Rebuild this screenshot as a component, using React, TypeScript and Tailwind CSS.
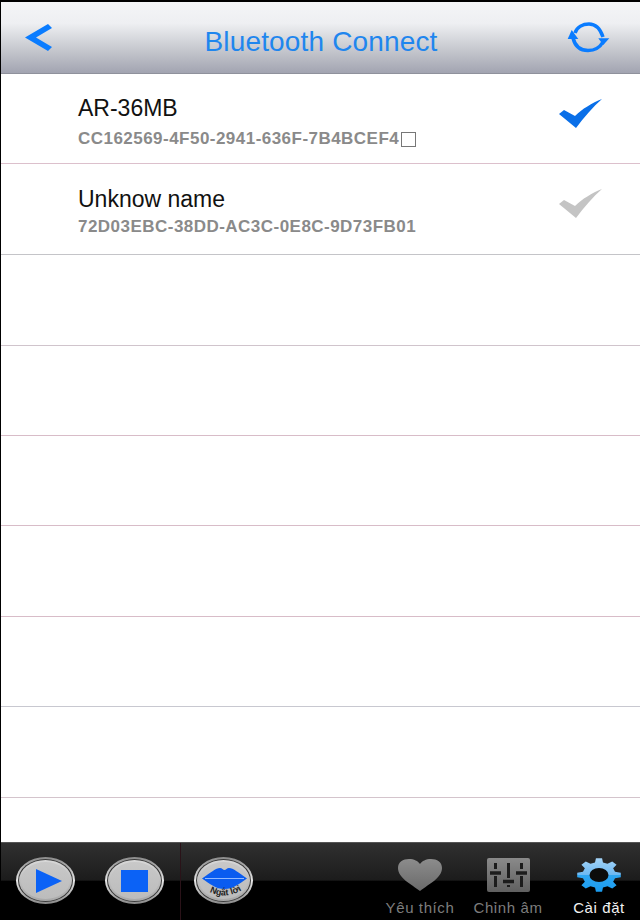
const rows: { name?: string; id?: string; check?: string; line: string; h: string; top?: string; gap?: string }[] = [
  { name: "AR-36MB", id: "CC162569-4F50-2941-636F-7B4BCEF4", check: "#0a6fe8", line: "border-[#dcc0cc]", h: "h-[90px]", top: "pt-[8px]", gap: "mt-[9px]" },
  { name: "Unknow name", id: "72D03EBC-38DD-AC3C-0E8C-9D73FB01", check: "#c4c4c4", line: "border-[#c4c4c8]", h: "h-[91px]", top: "pt-[5px]", gap: "mt-[6px]" },
  { line: "border-[#d0c4cc]", h: "h-[91px]" },
  { line: "border-[#d8bcc8]", h: "h-[90px]" },
  { line: "border-[#d8bcc8]", h: "h-[90px]" },
  { line: "border-[#d8bcc8]", h: "h-[91px]" },
  { line: "border-[#c8c8d0]", h: "h-[90px]" },
  { line: "border-[#d4c4cc]", h: "h-[91px]" },
];

function gearPath() {
  const cx = 22;
  const cy = 17;
  const pts: string[] = [];
  const at = (deg: number, rx: number, ry: number) => {
    const a = (deg * Math.PI) / 180;
    return `${(cx + Math.cos(a) * rx).toFixed(2)} ${(cy + Math.sin(a) * ry).toFixed(2)}`;
  };
  for (let i = 0; i < 8; i++) {
    const c = i * 45;
    pts.push(at(c - 14, 16.5, 13), at(c - 8, 22, 17), at(c + 8, 22, 17), at(c + 14, 16.5, 13));
  }
  return `M${pts.join(" L")} Z`;
}

function Check({ color }: { color: string }) {
  return (
    <svg width="46" height="32" viewBox="0 0 46 32" className="-mt-[10px] -mr-[2px]">
      <path d="M1 16 L6 12 L17 18 C24 11 34 5 44 1 C35 9 26 19 18 30 Z" fill={color} />
    </svg>
  );
}

function Disc({ children }: { children: React.ReactNode }) {
  return (
    <div className="w-[59px] h-[47px] rounded-[50%] bg-gradient-to-b from-[#8a8a8a] via-[#e8e8e8] to-[#8a8a8a] p-[2px] shrink-0">
      <div className="w-full h-full rounded-[50%] bg-[#3a3a3a] p-[1px]">
        <div className="w-full h-full rounded-[50%] bg-gradient-to-b from-[#d8d8d8] to-[#a8a8a8] p-[2px]">
          <div className="relative w-full h-full rounded-[50%] bg-gradient-to-b from-[#c8c8c8] to-[#bcbcbc] flex items-center justify-center overflow-hidden">
            {children}
          </div>
        </div>
      </div>
    </div>
  );
}

export default function App() {
  return (
    <div className="w-[640px] h-[920px] bg-white flex flex-col overflow-hidden border-l border-l-black font-['Liberation_Sans',Arial,sans-serif]">
      <div className="h-[2px] bg-black -ml-px shrink-0" />
      <header className="h-[72px] shrink-0 flex items-center justify-between border-b border-b-[#8f919c] bg-[linear-gradient(to_bottom,#f4f5f7_0%,#eeeff2_30%,#c8cad0_65%,#a2a4b1_100%)] pl-[24px] pr-[30px]">
        <svg width="28" height="28" viewBox="0 0 28 28" className="mt-[1px]">
          <path d="M0 13.5 L23 0 L27 4 L11 13.5 L27 23 L23 27 Z" fill="#0a7cff" />
        </svg>
        <h1 className="text-[28px] leading-none text-[#1f86ee] tracking-[0.15px] pt-[9px] pl-[22px]">Bluetooth Connect</h1>
        <svg width="43" height="32" viewBox="0 0 43 32" fill="none">
          <path d="M8 11 C10 5 16 2 22 2 C28 2 33 6 36 15" stroke="#0a7cff" strokeWidth="3.5" />
          <path d="M36 20 C32 27 26 28.500 21 28.500 C13 28.500 8 24 6 16" stroke="#0a7cff" strokeWidth="3.500" />
          <path d="M4.700 8 L0.700 17 L11.300 17 Z" fill="#0a7cff" />
          <path d="M31.300 16.300 L42.300 16.300 L36.300 23 Z" fill="#0a7cff" />
        </svg>
      </header>
      <main className="flex-1 overflow-hidden">
        {rows.map((r, i) => (
          <div key={i} className={`${r.h} flex items-center justify-between border-b ${r.line} pl-[77px] pr-[38px]`}>
            {r.name && (
              <>
                <div className={r.top}>
                  <div className="text-[23px] leading-[24px] text-[#111111]">{r.name}</div>
                  <div className={`${r.gap} text-[17px] leading-[20px] font-bold text-[#8a8a8a] tracking-[0.47px] flex items-center`}>
                    {r.id}
                    {i === 0 && <span className="inline-block w-[15px] h-[15px] border border-[#777777] ml-[2px]" />}
                  </div>
                </div>
                <Check color={r.check!} />
              </>
            )}
          </div>
        ))}
      </main>
      <footer className="relative h-[78px] shrink-0 -ml-px border-t border-t-[#555555] bg-[linear-gradient(to_bottom,#303030_0%,#1c1c1c_48%,#000000_50%,#000000_100%)] flex items-center pl-[16px]">
        <div className="flex items-center gap-[30px] -mt-[2px]">
          <Disc>
            <svg width="26" height="24" viewBox="0 0 26 24" className="ml-[6px]"><path d="M0 0 L26 12 L0 24 Z" fill="#0b62f6" /></svg>
          </Disc>
          <Disc>
            <div className="w-[27px] h-[22px] bg-[#0b62f6]" />
          </Disc>
          <Disc>
            <svg className="absolute top-0 left-0 w-full h-full" viewBox="0 0 49 37">
              <path d="M3 16.500 C11 11 17 6 21 6 C23 6 24 8 25.500 8 C27 8 28 6 30 6 C34 6 40 11 48 16.500 C40 22 34 27 25.500 27 C17 27 11 22 3 16.500 Z" fill="#0a5cf0" />
              <path d="M6 16.500 H45" stroke="#8fb8ff" strokeWidth="1.200" />
              <path id="lipArc" d="M7 28 Q26 40 46 26" fill="none" />
              <text fontSize="9" fontWeight="700" fill="#222222" fontFamily="'Liberation Sans', Arial, sans-serif">
                <textPath href="#lipArc" startOffset="50%" textAnchor="middle">Ngắt lời</textPath>
              </text>
            </svg>
          </Disc>
        </div>
        <div className="absolute top-0 bottom-0 left-[180px] w-px bg-[#2a1218]" />
        <nav className="ml-auto flex items-end text-[15px] leading-[16px] tracking-[0.6px] pt-[12px]">
          <div className="w-[88px] flex flex-col items-center text-[#7d7d7d]">
            <svg width="46" height="33" viewBox="0 0 46 33" className="-mt-[1px]">
              <defs><linearGradient id="h" x1="0" y1="0" x2="0" y2="1"><stop offset="0" stopColor="#8c8c8c" /><stop offset="1" stopColor="#6a6a6a" /></linearGradient></defs>
              <path d="M23 33 C14 26 1 20 1 10 C1 4 6 1 12 1 C17 1 21 3 23 6 C25 3 29 1 34 1 C40 1 45 4 45 10 C45 20 32 26 23 33 Z" fill="url(#h)" />
            </svg>
            <span className="mt-[9px]">Yêu thích</span>
          </div>
          <div className="w-[88px] flex flex-col items-center text-[#7d7d7d]">
            <svg width="43" height="34" viewBox="0 0 43 34" className="-mt-[1px]">
              <defs><linearGradient id="s" x1="0" y1="0" x2="0" y2="1"><stop offset="0" stopColor="#8a8a8a" /><stop offset="1" stopColor="#606060" /></linearGradient></defs>
              <rect width="43" height="34" rx="2" fill="url(#s)" />
              <g stroke="#1c1c1c" strokeWidth="3">
                <path d="M8.500 5 V11 M8.500 18 V29 M21.500 5 V20 M21.500 27 V29 M34.500 5 V11 M34.500 18 V29" />
              </g>
              <g stroke="#1c1c1c" strokeWidth="3.500">
                <path d="M3 15 H14 M16 23.500 H27 M29 15 H40" />
              </g>
            </svg>
            <span className="mt-[8px]">Chỉnh âm</span>
          </div>
          <div className="ml-[6px] w-[82px] flex flex-col items-center text-[#f2f2f2]">
            <svg width="44" height="34" viewBox="0 0 44 34" className="-mt-[1px]">
              <defs><linearGradient id="g" x1="0" y1="0" x2="0" y2="1"><stop offset="0" stopColor="#a4d4f8" /><stop offset="0.500" stopColor="#6cb8f2" /><stop offset="0.500" stopColor="#2ea6f2" /><stop offset="1" stopColor="#1a9cf0" /></linearGradient></defs>
              <path d={gearPath()} fill="url(#g)" />
              <ellipse cx="22" cy="17" rx="9.500" ry="7" fill="#0c0c0c" />
            </svg>
            <span className="mt-[8px]">Cài đặt</span>
          </div>
        </nav>
      </footer>
    </div>
  );
}
